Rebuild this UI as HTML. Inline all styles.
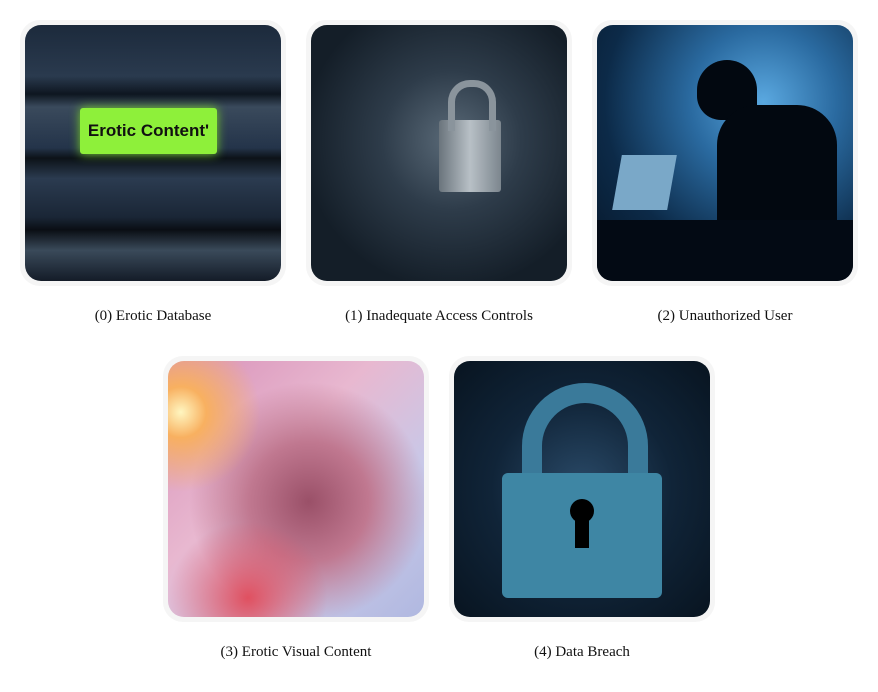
<!DOCTYPE html>
<html><head><style>
body{margin:0;width:878px;height:692px;background:#fff;font-family:"Liberation Serif",serif;position:relative;overflow:hidden}
.card{position:absolute;width:266px;height:266px;border-radius:20px;background:#f5f5f5}
.img{position:absolute;left:5px;top:5px;width:256px;height:256px;border-radius:16px;overflow:hidden}
.cap{position:absolute;width:300px;text-align:center;font-size:15px;color:#111}
</style></head><body>
<div class="card" style="left:20px;top:20px"><div class="img" style="background:linear-gradient(#1c2a3c 0,#2a3a4e 20%,#0e1620 27%,#3a4a5c 32%,#24344a 48%,#0c1218 52%,#2b3b50 60%,#1a2636 75%,#0a0e14 80%,#3a4a5a 88%,#141c28 100%)">
<div style="position:absolute;left:55px;top:83px;width:137px;height:46px;background:#8ef03a;border-radius:3px;box-shadow:0 0 10px #7ad02a;font:bold 17px 'Liberation Sans',sans-serif;color:#111;line-height:46px;text-align:center">Erotic Content'</div></div></div>
<div class="card" style="left:306px;top:20px"><div class="img" style="background:radial-gradient(circle at 55% 45%,#5a6a78 0,#2e3c4a 35%,#141e28 75%),#1a2430">
<div style="position:absolute;left:128px;top:95px;width:62px;height:72px;background:linear-gradient(90deg,#6a747c,#b8c0c6,#7c868e);border-radius:3px"></div>
<div style="position:absolute;left:137px;top:55px;width:34px;height:44px;border:7px solid #8a949c;border-bottom:none;border-radius:22px 22px 0 0"></div></div></div>
<div class="card" style="left:592px;top:20px"><div class="img" style="background:radial-gradient(circle at 65% 30%,#5aa8e0 0,#2a6aa0 30%,#0c2a48 65%,#061424 100%)">
<div style="position:absolute;left:100px;top:35px;width:60px;height:60px;background:#020810;border-radius:50% 50% 20% 40%"></div>
<div style="position:absolute;left:120px;top:80px;width:120px;height:176px;background:#020810;border-radius:40px 40px 0 0"></div>
<div style="position:absolute;left:20px;top:130px;width:55px;height:55px;background:#7aa8c8;transform:skewX(-10deg)"></div>
<div style="position:absolute;left:0;top:195px;width:256px;height:61px;background:#030a14"></div></div></div>
<div class="card" style="left:163px;top:356px"><div class="img" style="background:radial-gradient(circle at 5% 20%,#fff6c0 0,#f8b060 8%,transparent 25%),radial-gradient(ellipse at 55% 55%,#9a5068 0,#c07890 30%,transparent 60%),linear-gradient(135deg,#d890b8,#e8b8d0 40%,#c8c8e8 70%,#b0b8e0)">
<div style="position:absolute;left:0;top:160px;width:160px;height:96px;background:radial-gradient(ellipse at 50% 80%,#e05060,transparent 70%)"></div></div></div>
<div class="card" style="left:449px;top:356px"><div class="img" style="background:radial-gradient(circle at 50% 50%,#2a4a68 0,#102438 50%,#081420 100%)">
<div style="position:absolute;left:68px;top:22px;width:86px;height:100px;border:20px solid #3a7a9a;border-bottom:none;border-radius:70px 70px 0 0"></div>
<div style="position:absolute;left:48px;top:112px;width:160px;height:125px;background:#3e86a4;border-radius:6px"></div>
<div style="position:absolute;left:116px;top:138px;width:24px;height:24px;background:#000;border-radius:50%"></div>
<div style="position:absolute;left:121px;top:155px;width:14px;height:32px;background:#000"></div></div></div>
<div class="cap" style="left:3px;top:308px">(0) Erotic Database</div>
<div class="cap" style="left:289px;top:308px">(1) Inadequate Access Controls</div>
<div class="cap" style="left:575px;top:308px">(2) Unauthorized User</div>
<div class="cap" style="left:146px;top:644px">(3) Erotic Visual Content</div>
<div class="cap" style="left:432px;top:644px">(4) Data Breach</div>
</body></html>
